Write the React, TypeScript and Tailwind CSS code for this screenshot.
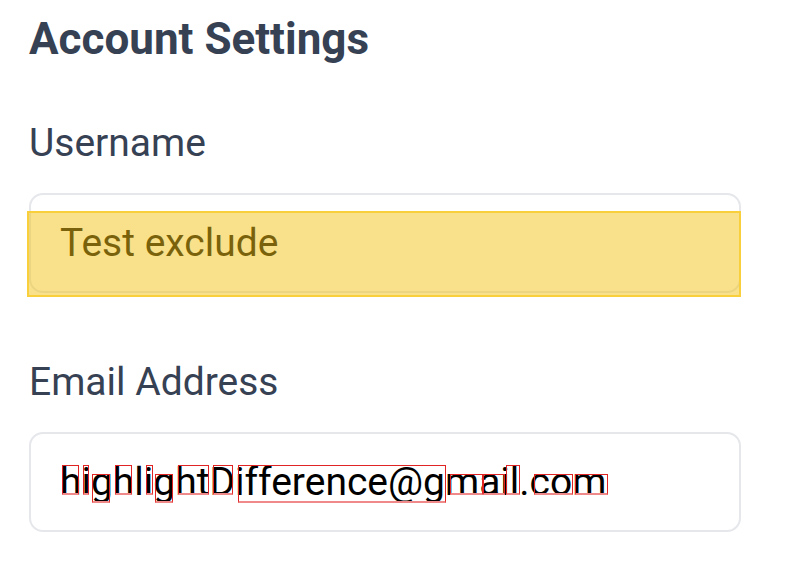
import React from "react";

// diff highlight boxes, relative to the email field's top-left corner
const diffBoxes: { left: number; top: number; width: number; height: number }[] = [
  { left: 33, top: 33, width: 17, height: 30 },
  { left: 54, top: 33, width: 6, height: 30 },
  { left: 63, top: 42, width: 18, height: 29 },
  { left: 86, top: 33, width: 17, height: 30 },
  { left: 117, top: 33, width: 7, height: 30 },
  { left: 126, top: 42, width: 18, height: 29 },
  { left: 149, top: 33, width: 31, height: 30 },
  { left: 184, top: 33, width: 20, height: 30 },
  { left: 209, top: 33, width: 208, height: 38 },
  { left: 421, top: 42, width: 33, height: 21 },
  { left: 454, top: 42, width: 22, height: 21 },
  { left: 477, top: 33, width: 14, height: 30 },
  { left: 505, top: 42, width: 39, height: 21 },
  { left: 546, top: 42, width: 33, height: 21 },
];

function Field({ label, value, children }: { label: string; value: string; children?: React.ReactNode }) {
  return (
    <div>
      <label className="block text-[39px] leading-[47px] text-gray-700">{label}</label>
      <div className="relative mt-[26px] w-[712px]">
        <input
          readOnly
          value={value}
          className="h-[100px] w-full rounded-[14px] border-2 border-[#e5e7eb] bg-white pl-[29px] text-[39px] text-black outline-none"
        />
        {children}
      </div>
    </div>
  );
}

export default function App() {
  return (
    <div className="min-h-screen bg-white pl-[29px] pt-[13px] font-['Roboto',sans-serif]">
      <h1 className="text-[44px] leading-[52px] font-bold text-gray-700">Account Settings</h1>
      <div className="mt-[55px] flex flex-col gap-[66px]">
        <Field label="Username" value="Test exclude">
          <div className="pointer-events-none absolute left-[-2px] top-[18px] h-[86px] w-[714px] border-2 border-[#f9cf3c] bg-[rgba(243,195,23,0.5)]" />
        </Field>
        <Field label="Email Address" value="highlightDifference@gmail.com">
          {diffBoxes.map((b, i) => (
            <span
              key={i}
              className="pointer-events-none absolute border border-[#e02424] border-b-2 border-b-[#f08a8a]"
              style={{ left: b.left, top: b.top, width: b.width, height: b.height }}
            />
          ))}
        </Field>
      </div>
    </div>
  );
}
